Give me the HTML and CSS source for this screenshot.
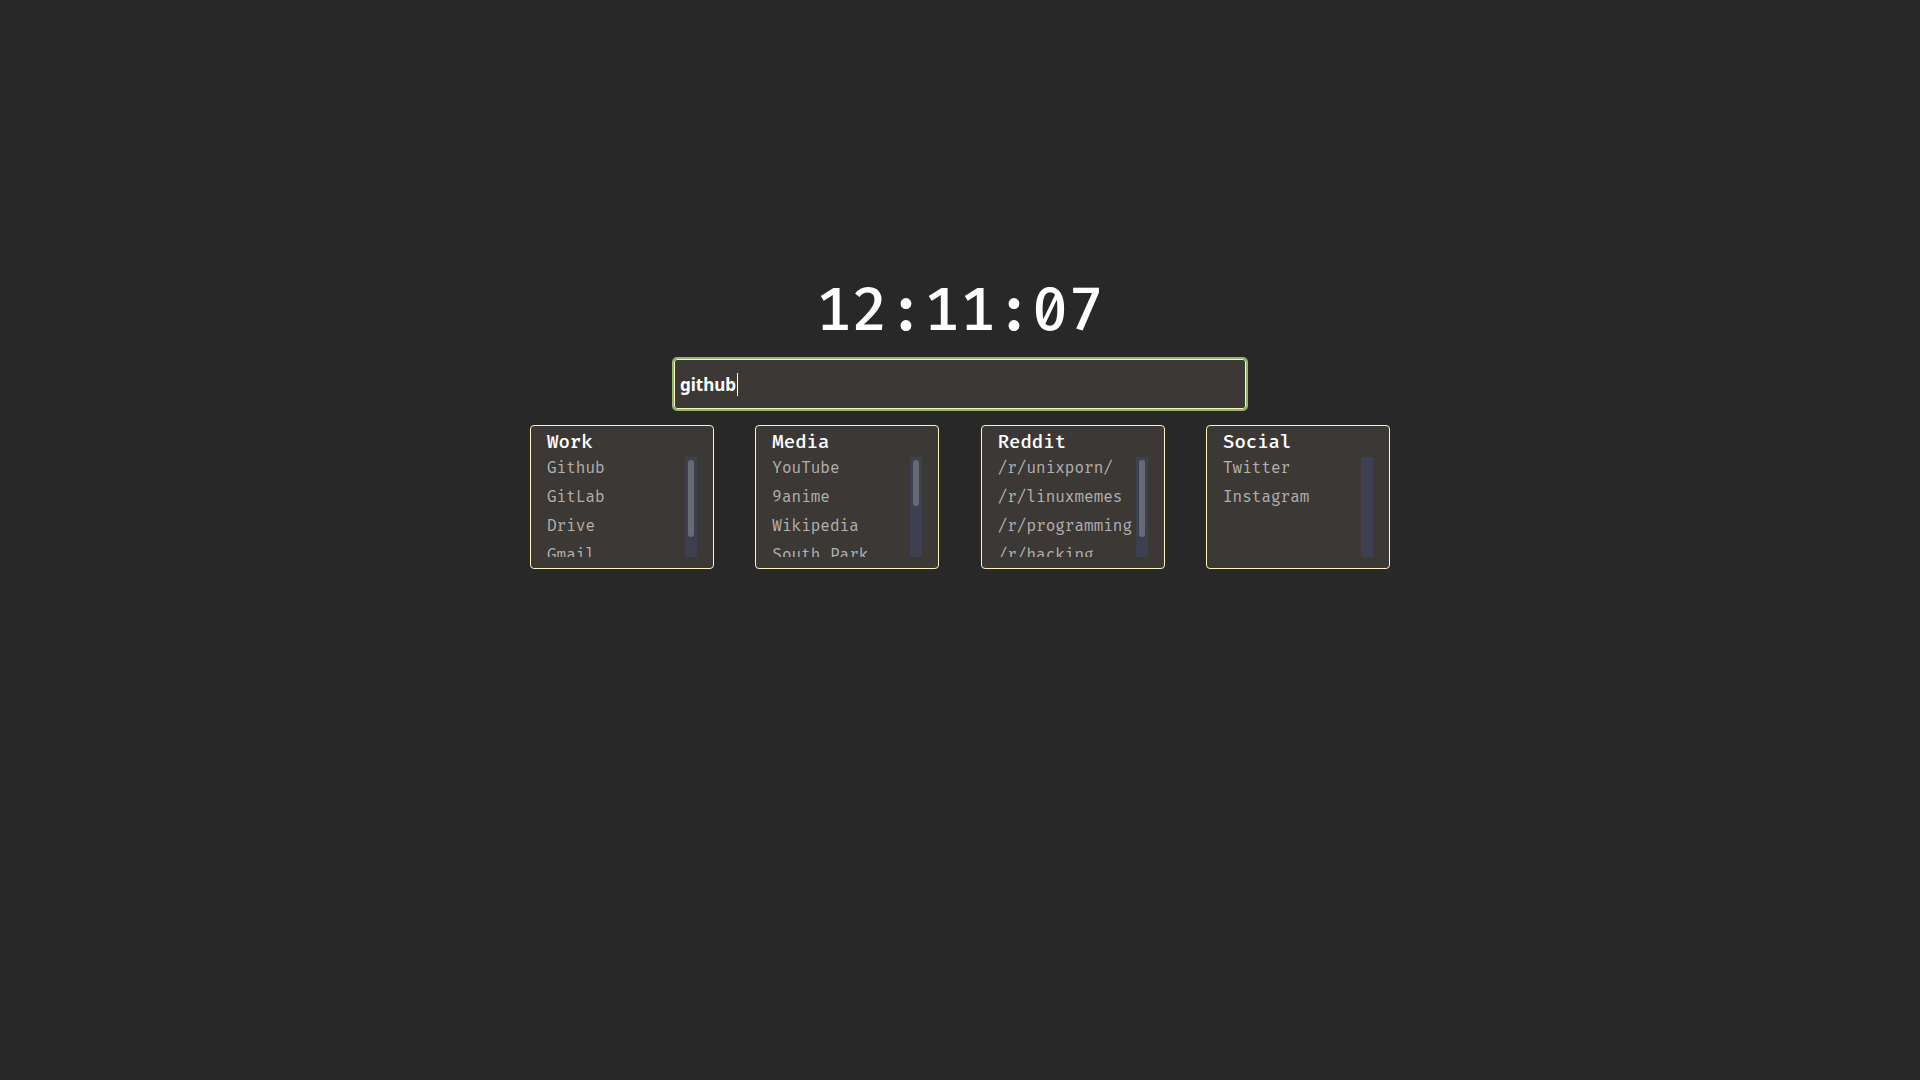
FILE: index.html
```html
<!DOCTYPE html>
<html lang="en">
<head>
<meta charset="utf-8">
<title>Start page</title>
<link rel="stylesheet" href="styles.css">
</head>
<body>
<main class="page">
  <h1 class="clock">12:11:07</h1>
  <form class="search">
    <input class="search-input" type="text" value="github" aria-label="Search">
    <span class="caret" aria-hidden="true"></span>
  </form>
  <div class="cards">
    <section class="card">
      <h2 class="card-title">Work</h2>
      <div class="card-body">
        <ul class="links">
          <li><a href="#">Github</a></li>
          <li><a href="#">GitLab</a></li>
          <li><a href="#">Drive</a></li>
          <li><a href="#">Gmail</a></li>
        </ul>
        <div class="track" aria-hidden="true"><div class="thumb"></div></div>
      </div>
    </section>
    <section class="card">
      <h2 class="card-title">Media</h2>
      <div class="card-body">
        <ul class="links">
          <li><a href="#">YouTube</a></li>
          <li><a href="#">9anime</a></li>
          <li><a href="#">Wikipedia</a></li>
          <li><a href="#">South Park</a></li>
        </ul>
        <div class="track" aria-hidden="true"><div class="thumb thumb-short"></div></div>
      </div>
    </section>
    <section class="card">
      <h2 class="card-title">Reddit</h2>
      <div class="card-body">
        <ul class="links">
          <li><a href="#">/r/unixporn/</a></li>
          <li><a href="#">/r/linuxmemes</a></li>
          <li><a href="#">/r/programming</a></li>
          <li><a href="#">/r/hacking</a></li>
        </ul>
        <div class="track" aria-hidden="true"><div class="thumb"></div></div>
      </div>
    </section>
    <section class="card">
      <h2 class="card-title">Social</h2>
      <div class="card-body">
        <ul class="links">
          <li><a href="#">Twitter</a></li>
          <li><a href="#">Instagram</a></li>
        </ul>
        <div class="track" aria-hidden="true"></div>
      </div>
    </section>
  </div>
</main>
</body>
</html>
```
FILE: styles.css
```css
* {
  box-sizing: border-box;
}

body {
  margin: 0;
  background: #282828;
  color: #fff;
  font-family: "Fira Mono", "DejaVu Sans Mono", monospace;
}

.page {
  display: flex;
  flex-direction: column;
  align-items: center;
  padding: 274px 16px 16px;
}

.clock {
  margin: 0 0 13px;
  font-size: 60px;
  line-height: 72px;
  font-weight: 500;
  font-feature-settings: "zero";
}

.search {
  position: relative;
  width: 100%;
  max-width: 572px;
  margin-bottom: 16px;
}

.search-input {
  display: block;
  width: 100%;
  height: 50px;
  padding: 0 5px;
  border: 1px solid #fff3c0;
  border-radius: 3px;
  outline: 2px solid #8fb66b;
  background: #3c3836;
  color: #fff;
  font: 700 17px "Noto Sans", sans-serif;
}

.caret {
  position: absolute;
  left: 63px;
  top: 14px;
  width: 1px;
  height: 23px;
  background: #fff;
}

.cards {
  display: flex;
  flex-wrap: wrap;
  justify-content: space-between;
  gap: 16px;
  width: 100%;
  max-width: 860px;
}

.card {
  flex: 0 0 184px;
  padding: 4px 16px 11px;
  border: 1px solid #fff3c0;
  border-radius: 4px;
  background: #3c3836;
}

.card-title {
  margin: 0 0 4px;
  font-size: 19px;
  line-height: 23px;
  font-weight: 500;
}

.card-body {
  display: flex;
  height: 100px;
}

.links {
  flex: 1;
  margin: 0;
  padding: 0;
  overflow: hidden;
  list-style: none;
  font-size: 16px;
  line-height: 21px;
  white-space: nowrap;
}

.links li {
  margin-bottom: 8px;
}

.links a {
  color: #b2afad;
  text-decoration: none;
}

.track {
  flex: none;
  width: 12px;
  padding: 3px;
  background: #3c4051;
}

.thumb {
  height: 77px;
  border-radius: 3px;
  background: #656b70;
}

.thumb-short {
  height: 46px;
}
```
